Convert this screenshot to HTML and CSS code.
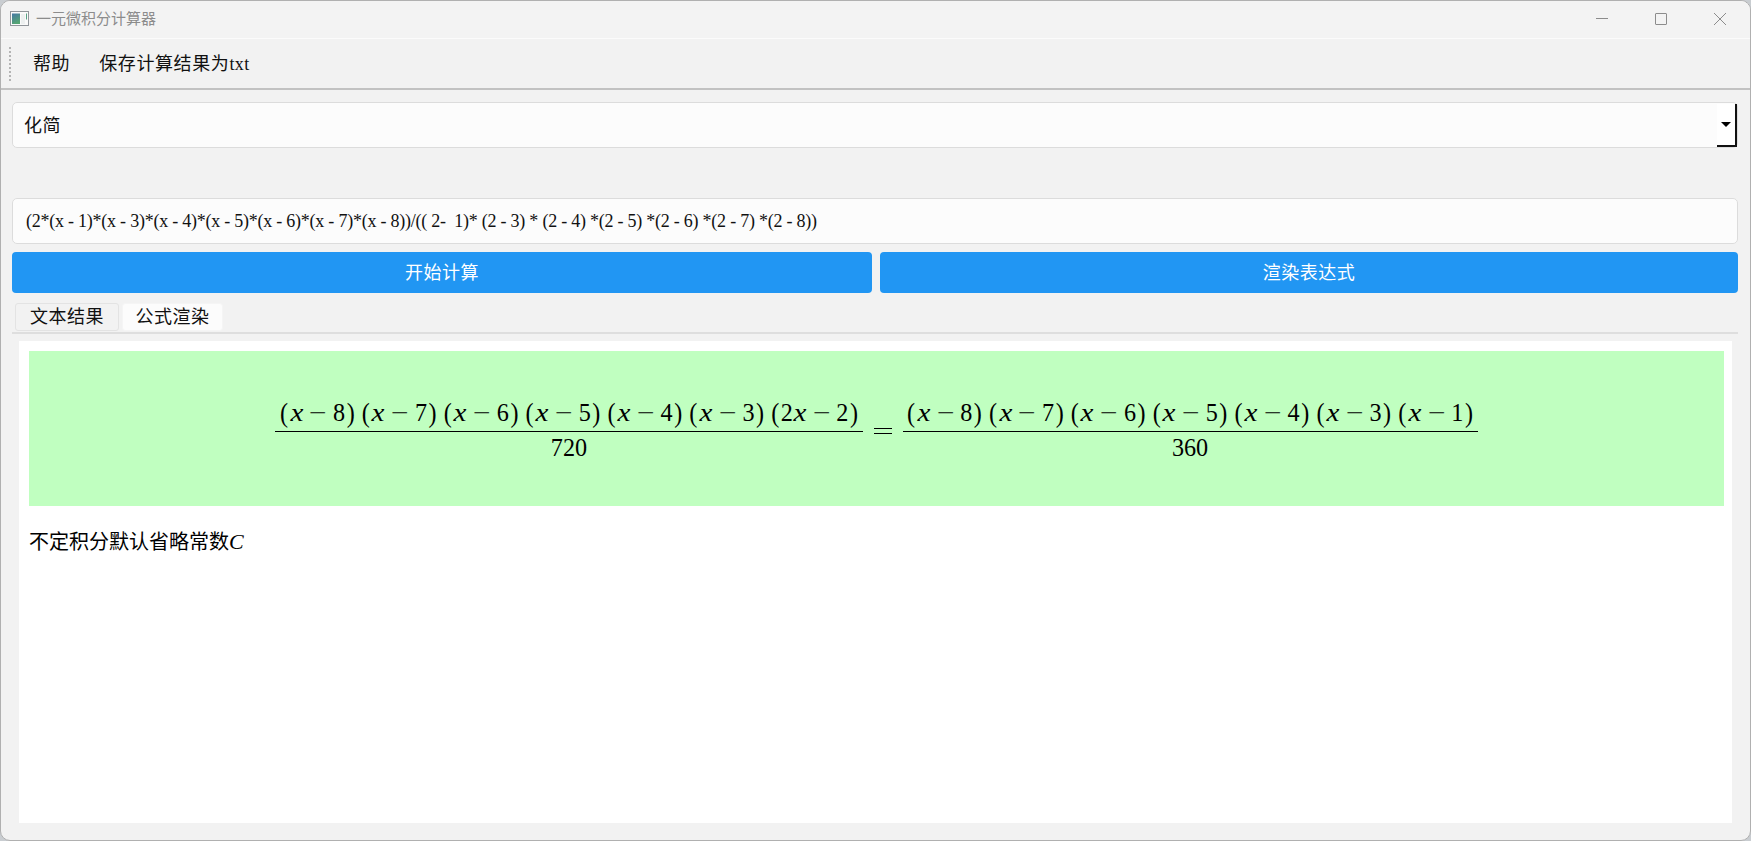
FILE: index.html
```html
<!DOCTYPE html>
<html lang="zh-CN">
<head>
<meta charset="utf-8">
<title>一元微积分计算器</title>
<link rel="stylesheet" href="styles.css">
</head>
<body>
<div class="window">
  <header class="titlebar">
    <svg class="app-icon" width="19" height="15" viewBox="0 0 19 15">
      <defs><linearGradient id="g" x1="0" y1="0" x2="0.4" y2="1"><stop offset="0" stop-color="#4577a5"/><stop offset="1" stop-color="#55a573"/></linearGradient></defs>
      <rect x=".5" y=".5" width="18" height="14" fill="#fafafa" stroke="#90959a"/>
      <rect x="2" y="2.500" width="8" height="10.500" fill="url(#g)"/>
      <rect x="11" y="3" width="4" height="10" fill="#edf0f0"/>
      <path d="M16.500 2.500v6" stroke="#56a184"/>
    </svg>
    <span class="title">一元微积分计算器</span>
    <div class="controls">
      <svg width="12" height="12" viewBox="0 0 12 12"><path d="M0 5.500h12"/></svg>
      <svg width="12" height="12" viewBox="0 0 12 12"><rect x=".5" y=".5" width="11" height="11" rx=".5"/></svg>
      <svg width="12" height="12" viewBox="0 0 12 12"><path d="M0 0l12 12M12 0L0 12"/></svg>
    </div>
  </header>
  <nav class="toolbar">
    <span class="grip"></span>
    <span class="tool">帮助</span>
    <span class="tool">保存计算结果为<span class="latin">txt</span></span>
  </nav>
  <main class="content">
    <div class="field combo">
      <span class="combo-text">化简</span>
      <span class="combo-button"><svg width="10" height="5" viewBox="0 0 10 5"><path d="M0 0h10L5 5z"/></svg></span>
    </div>
    <div class="field expression"><span>(2*(x - 1)*(x - 3)*(x - 4)*(x - 5)*(x - 6)*(x - 7)*(x - 8))/(( 2-  1)* (2 - 3) * (2 - 4) *(2 - 5) *(2 - 6) *(2 - 7) *(2 - 8))</span></div>
    <div class="buttons">
      <div class="button">开始计算</div>
      <div class="button">渲染表达式</div>
    </div>
    <div class="tabs">
      <div class="tab">文本结果</div>
      <div class="tab active">公式渲染</div>
    </div>
    <section class="page">
      <div class="formula">
        <div class="fraction">
          <div class="numerator"><span class="factor"><b>(</b><i>x</i><u>−</u><s>8</s><b>)</b></span><span class="factor"><b>(</b><i>x</i><u>−</u><s>7</s><b>)</b></span><span class="factor"><b>(</b><i>x</i><u>−</u><s>6</s><b>)</b></span><span class="factor"><b>(</b><i>x</i><u>−</u><s>5</s><b>)</b></span><span class="factor"><b>(</b><i>x</i><u>−</u><s>4</s><b>)</b></span><span class="factor"><b>(</b><i>x</i><u>−</u><s>3</s><b>)</b></span><span class="factor"><b>(</b><s>2</s><i>x</i><u>−</u><s>2</s><b>)</b></span></div>
          <div class="denominator">720</div>
        </div>
        <svg class="equals" width="18" height="8" viewBox="0 0 18 8" shape-rendering="crispEdges"><path d="M0 1.500h18M0 6.500h18"/></svg>
        <div class="fraction">
          <div class="numerator"><span class="factor"><b>(</b><i>x</i><u>−</u><s>8</s><b>)</b></span><span class="factor"><b>(</b><i>x</i><u>−</u><s>7</s><b>)</b></span><span class="factor"><b>(</b><i>x</i><u>−</u><s>6</s><b>)</b></span><span class="factor"><b>(</b><i>x</i><u>−</u><s>5</s><b>)</b></span><span class="factor"><b>(</b><i>x</i><u>−</u><s>4</s><b>)</b></span><span class="factor"><b>(</b><i>x</i><u>−</u><s>3</s><b>)</b></span><span class="factor"><b>(</b><i>x</i><u>−</u><s>1</s><b>)</b></span></div>
          <div class="denominator">360</div>
        </div>
      </div>
      <p class="note">不定积分默认省略常数<span class="constant">C</span></p>
    </section>
  </main>
</div>
</body>
</html>
```
FILE: styles.css
```css
* { box-sizing: border-box; }
body { margin: 0; background: #c9cdd1; overflow: hidden; }
.window {
  display: flex; flex-direction: column;
  width: 1751px; height: 841px;
  border: 1px solid #b0b0b0; border-radius: 10px;
  background: #f2f2f2; overflow: hidden;
  font-family: "Liberation Serif", "Noto Sans CJK SC", serif;
  font-size: 18px; color: #111;
}
.titlebar {
  display: flex; align-items: center; flex: none;
  height: 38px; padding: 0 24px 2px 9px;
  border-bottom: 1px solid #fbfbfb; background: #f3f3f3;
}
.title {
  margin: -2px 0 0 7px; color: #8c8c8c;
  font: 15px/20px "Noto Sans CJK SC", sans-serif;
}
.controls { display: flex; gap: 47px; margin-left: auto; }
.controls svg { fill: none; stroke: #8c8c8c; overflow: visible; }
.toolbar {
  display: flex; align-items: center; flex: none;
  height: 51px; padding-left: 8px; border-bottom: 2px solid #c2c2c2;
}
.grip {
  width: 2px; height: 34px; margin-right: 22px;
  background: repeating-linear-gradient(#b4b4b4 0 2px, transparent 2px 4px);
}
.tool { margin: 1px 29px 0 0; line-height: 26px; letter-spacing: .6px; }
.latin { letter-spacing: .4px; }
.content { display: flex; flex-direction: column; flex: 1; padding: 12px 12px 17px 11px; }
.field {
  display: flex; align-items: center; flex: none;
  height: 46px; border: 1px solid #dcdcdc; border-radius: 5px; background: #fcfcfc;
}
.combo { margin-bottom: 50px; padding-left: 11px; }
.combo-text { margin-top: -2px; letter-spacing: .6px; }
.combo-button {
  display: flex; align-items: center; justify-content: center;
  width: 20px; height: 43px; margin-left: auto;
  background: #fff; border-right: 2px solid #111; border-bottom: 2px solid #111;
}
.expression { padding-left: 13px; white-space: pre; letter-spacing: -.24px; }
.buttons { display: grid; grid-template-columns: 860px 858px; gap: 8px; margin-top: 8px; }
.button {
  height: 41px; border-radius: 4px; background: #2196f3; color: #fff;
  text-align: center; line-height: 42px; letter-spacing: .5px;
}
.tabs {
  display: flex; align-items: flex-start; flex: none; gap: 3px;
  height: 41px; padding: 10px 0 0 3px; border-bottom: 2px solid #dedede;
}
.tab {
  width: 104px; height: 28px; border: 1px solid #e3e3e3; border-radius: 3px;
  text-align: center; line-height: 26px; letter-spacing: .5px;
}
.tab.active { width: 101px; background: #fcfcfc; border-color: #f5f5f5; }
.page { flex: 1; margin: 7px 6px 0 7px; padding: 10px 8px 0 10px; background: #fff; }
.formula {
  display: flex; justify-content: center; height: 155px; padding-top: 44px;
  background: #c0ffc0; color: #000; font-size: 24.2px;
}
.fraction { display: flex; flex-direction: column; align-items: center; }
.numerator {
  display: flex; gap: .167em; height: 37px; padding: 0 3px;
  border-bottom: 1px solid #000; line-height: 35px;
}
.factor { display: flex; }
.factor b, .factor i, .factor u, .factor s { text-align: center; text-decoration: none; font-weight: 400; }
.factor b { width: .46em; transform: scaleY(1.12); }
.factor i { width: .572em; transform: scaleX(1.2); }
.factor u { width: 1.226em; transform: scaleX(1.3); }
.factor s { width: .5em; }
.denominator { line-height: 32px; }
.equals { margin: 32px 11px 0; stroke: #000; }
.note {
  margin: 19px 0 0; color: #000;
  font: 20px/32px "Noto Sans CJK SC", sans-serif;
}
.constant { font: italic 22px/20px "Liberation Serif", serif; }
```
